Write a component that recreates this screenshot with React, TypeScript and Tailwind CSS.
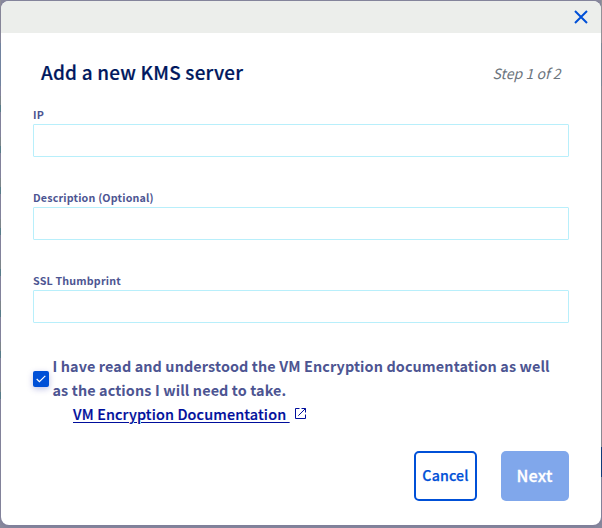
import { useState } from "react";

function Field({ id, label }: { id: string; label: string }) {
  return (
    <div className="mb-[35px] h-12">
      <label
        htmlFor={id}
        className="flex h-[15px] items-center whitespace-nowrap pb-1 text-[10.7px] font-bold leading-[11px] tracking-[0.18px] text-[#4d5592]"
      >
        {label}
      </label>
      <input id={id} className="block h-[33px] w-full rounded-[1px] border border-[#b8effb] bg-white px-2 text-sm outline-none" />
    </div>
  );
}

function Backdrop() {
  return (
    <div className="flex w-px shrink-0 flex-col">
      <div className="h-[43px] bg-[#929198]" />
      <div className="h-[43px] bg-[#6d8da5]" />
      {[0, 1, 2, 3, 4, 5, 6, 7].map((n) => (
        <div key={n} className="flex h-[41px] flex-col">
          <div className="h-[10px] bg-[#8b8c9f]" />
          <div className="h-[9px] bg-[#82917f]" />
          <div className="h-[7px] bg-[#3f817d]" />
          <div className="h-[15px] bg-[#8b8a9d]" />
        </div>
      ))}
    </div>
  );
}

export default function App() {
  const [checked, setChecked] = useState(true);
  return (
    <div className="flex h-[528px] w-[602px] overflow-hidden bg-[#8b8b9c] font-['Noto_Sans_CJK_SC','Noto_Sans',sans-serif]">
      <Backdrop />
      <main className="mt-px h-[524px] w-[600px] shrink-0 overflow-hidden rounded-[8px] bg-white shadow-[0_1px_6px_#77779a]">
        <header className="flex h-8 items-center justify-end bg-[#eceeeb] pr-[13px]">
          <button aria-label="Close" className="flex">
            <svg width="14" height="14" viewBox="0 0 14 14" fill="none" stroke="#0050d7" strokeWidth="2">
              <path d="M1 1L13 13M13 1L1 13" />
            </svg>
          </button>
        </header>
        <div className="flex h-[73px] items-center justify-between px-10 pt-[6px]">
          <h1 className="whitespace-nowrap pb-0.5 text-[18.9px] font-medium leading-7 tracking-[0.22px] text-[#00185e] [-webkit-text-stroke:0.2px_#00185e]">
            Add a new KMS server
          </h1>
          <span className="mr-[0.5px] whitespace-nowrap pt-px text-[14.1px] italic leading-6 text-[#6c757d]">Step 1 of 2</span>
        </div>
        <form className="px-8 pt-[3px]" onSubmit={(e) => e.preventDefault()}>
          <Field id="ip" label="IP" />
          <Field id="description" label="Description (Optional)" />
          <Field id="thumbprint" label="SSL Thumbprint" />
          <div className="-mt-1 flex h-12">
            <button
              type="button"
              role="checkbox"
              aria-checked={checked}
              onClick={() => setChecked(!checked)}
              className="mt-[17px] mr-[3.5px] flex h-4 w-4 shrink-0 items-center justify-center rounded-[2px] bg-[#0050d7] shadow-[0_2px_6px_rgba(0,14,156,0.25)]"
            >
              {checked && (
                <svg width="10" height="8" viewBox="0 0 10 8" fill="none" stroke="white" strokeWidth="1.2">
                  <path d="M0.7 4L3.4 6.7L9.3 0.8" />
                </svg>
              )}
            </button>
            <div className="whitespace-nowrap text-[14.4px] font-bold leading-6 tracking-[0.11px] text-[#4d5592]">
              I have read and understood the VM Encryption documentation as well
              <br />
              as the actions I will need to take.
            </div>
          </div>
          <a
            href="#docs"
            className="ml-10 flex h-6 items-center text-[14.4px] font-medium leading-6 tracking-[0.14px] text-[#000e9c] [-webkit-text-stroke:0.2px_#000e9c]"
          >
            <span className="whitespace-pre underline decoration-1 underline-offset-2">VM Encryption Documentation </span>
            <svg className="mb-px ml-[5px]" width="11" height="11" viewBox="0 0 11 11" fill="none" stroke="currentColor" strokeWidth="1">
              <path d="M4.5 0.5H0.5V10.5H10.5V6.5M6.5 0.5H10.5V4.5M10.5 0.5L3.3 7.7" />
            </svg>
          </a>
          <div className="mt-[25px] flex justify-end gap-6">
            <button className="h-[50px] w-[63px] whitespace-nowrap rounded-[5px] border-2 border-[#0050d7] pb-px text-[14.2px] font-medium tracking-[0.15px] text-[#0050d7] [-webkit-text-stroke:0.25px_#0050d7]">
              Cancel
            </button>
            <button className="h-[50px] w-[68px] whitespace-nowrap rounded-[5px] bg-[#80a7eb] pb-0.5 pr-px text-[16.2px] font-medium tracking-[0.2px] text-white [-webkit-text-stroke:0.3px_white]">
              Next
            </button>
          </div>
        </form>
      </main>
      <div className="flex w-px shrink-0 flex-col">
        <div className="h-[43px] bg-[#929198]" />
        <div className="h-[43px] bg-[#7b8795]" />
        <div className="h-[361px] bg-[#8a8993]" />
        <div className="h-[30px] bg-[#123b78]" />
      </div>
    </div>
  );
}
